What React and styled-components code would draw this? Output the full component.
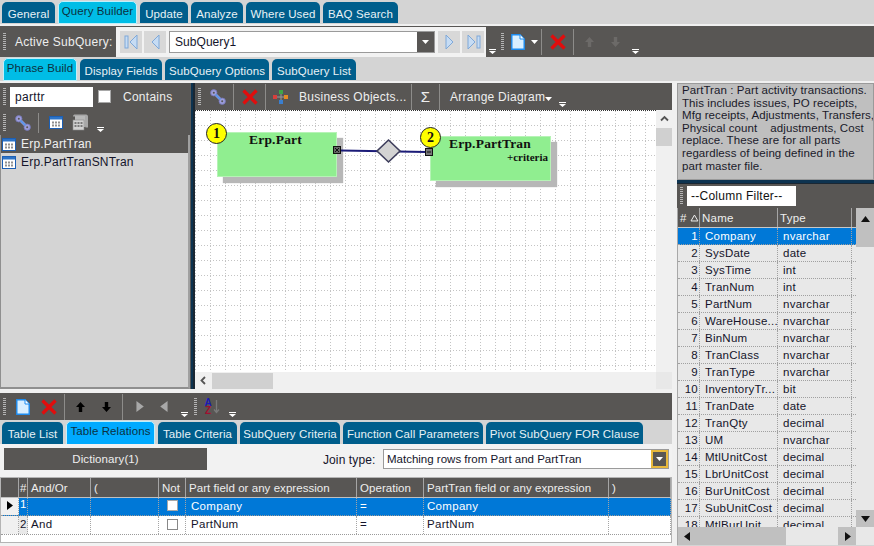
import React from "react";
import styled, { createGlobalStyle } from "styled-components";

const Global = createGlobalStyle`
  html, body { margin: 0; padding: 0; background: #d4d4d4; overflow: hidden; }
  * { box-sizing: border-box; }
`;
const DARK = "#585654";
const Page = styled.div`
  width: 874px; height: 546px; overflow: hidden; background: #d4d4d4;
  font: 11.5px "Liberation Sans", Arial, sans-serif; letter-spacing: .3px; color: #14142a;
  display: flex; flex-direction: column;
`;
const TabRow = styled.div`
  display: flex; align-items: flex-end; flex: none;
  height: ${p => p.$h}px; gap: ${p => p.$gap ?? 3}px; padding-left: ${p => p.$left}px;
  padding-bottom: ${p => p.$pb ?? 0}px;
  background: ${p => p.$bg ?? "#d4d4d4"};
  border-bottom: ${p => p.$line ? "2px solid #f0f0f0" : "0"};
`;
const Tab = styled.div`
  width: ${p => p.$w}px; height: ${p => (p.$active ? p.$th + 2 : p.$th)}px; flex: none;
  display: flex; align-items: center; justify-content: center; white-space: nowrap;
  border-radius: 5px 5px 0 0;
  font-size: 11.5px; letter-spacing: .1px;
  background: ${p => (p.$active ? p.$color ?? "#00bde6" : "#005e8c")};
  color: ${p => (p.$active ? "#0c3140" : "#e8f2f6")};
  border: ${p => (p.$active ? "1px solid #bff0fb" : "0")};
  padding-bottom: ${p => (p.$active ? 4 : 0)}px;
  padding-top: ${p => (p.$active ? 0 : 2)}px;
  margin-bottom: ${p => (p.$active ? -1 : 0)}px;
`;
const Bar = styled.div`
  display: flex; align-items: center; flex: none;
  height: ${p => p.$h}px; background: ${DARK}; color: #eeeeee;
`;
const Slot = styled.div`
  flex: none; width: ${p => p.$w}px; height: 100%;
  display: flex; align-items: center; justify-content: center;
`;
const SigmaSlot = styled(Slot)`
  font-size: 15px; letter-spacing: 0;
`;
const CornerSlot = styled(Slot)`
  align-items: flex-end; padding-bottom: 3px;
`;
const Grip = styled.div`
  flex: none; width: ${p => p.$w ?? 8}px; height: 100%;
  display: flex; align-items: center; justify-content: center;
  &::before {
    content: ""; flex: none; width: 3px; height: ${p => p.$h ?? 18}px;
    background: repeating-linear-gradient(#b4b4b4 0 1px, transparent 1px 2px);
  }
`;
const Sep = styled.div`
  flex: none; width: 1px; height: ${p => p.$h ?? 26}px; background: #8d8c8a;
`;
const BarLabel = styled.div`
  flex: none; width: ${p => p.$w}px; padding-left: ${p => p.$pl ?? 0}px;
  font-size: 12px; letter-spacing: .26px; white-space: nowrap; color: #eeeeee;
`;
const NavPanel = styled.div`
  flex: none; width: 370px; height: 30px; margin-top: 1px; background: #f2f2f2;
  display: flex; align-items: center; padding-left: 4px; gap: 2px;
`;
const NavBtn = styled.div`
  width: 22px; height: 22px; flex: none; background: #d8d8d8;
  display: flex; align-items: center; justify-content: center;
`;
const Combo = styled.div`
  flex: none; display: flex; align-items: stretch;
  width: ${p => p.$w}px; height: ${p => p.$h}px; margin: ${p => p.$mt ?? 0}px ${p => p.$mr ?? 0}px 0 ${p => p.$ml ?? 0}px;
  background: #fff; border: 1px solid #9a9a9a; color: #14142a;
`;
const ComboText = styled.div`
  flex: 1; padding-left: ${p => p.$pl ?? 5}px; display: flex; align-items: center;
  font-size: ${p => p.$fs}px; letter-spacing: ${p => p.$ls}px; white-space: nowrap;
`;
const ComboBtn = styled.div`
  width: ${p => p.$w}px; background: ${DARK}; display: flex; align-items: center; justify-content: center;
  border: ${p => (p.$gold ? "2px solid #e8b93c" : "0")};
`;
const Body = styled.div`
  flex: 1; display: flex; min-height: 0; background: #f0f0f0;
`;
const LeftCol = styled.div`
  width: 672px; flex: none; display: flex; flex-direction: column;
`;
const Upper = styled.div`
  display: flex; height: 306px; flex: none;
`;
const SearchPane = styled.div`
  width: 190px; flex: none; display: flex; flex-direction: column;
`;
const VSplit = styled.div`
  flex: none; width: 5px; border-right: 2px solid #1a2733; background: #0d3350; border-left: 1px solid #5a5a5a;
`;
const SearchInput = styled.div`
  width: 83px; height: 20px; margin-left: 2px; background: #fff; padding-left: 5px;
  display: flex; align-items: center; font-size: 12px; color: #14142a; flex: none;
`;
const CheckBox = styled.div`
  width: ${p => p.$s ?? 13}px; height: ${p => p.$s ?? 13}px; flex: none; background: #fff;
  border: 1px solid ${p => p.$edge ?? "#a8a8a8"};
`;
const TableList = styled.div`
  flex: 1; background: #d4d4d4; border: 1px solid #8f8f8f; border-top: 0; border-bottom-width: 2px;
  border-right: 2px solid #a0a0a0;
`;
const ListRow = styled.div`
  height: 18px; display: flex; align-items: center; gap: 5px; padding-left: 1px;
  font-size: 12px; letter-spacing: .2px;
  background: ${p => (p.$sel ? DARK : "transparent")};
  color: ${p => (p.$sel ? "#f0f0f0" : "#14142a")};
`;
const DiagramPane = styled.div`
  flex: 1; display: flex; flex-direction: column; min-width: 0;
`;
const CanvasArea = styled.div`
  flex: 1; display: grid; grid-template-columns: 1fr 16px; grid-template-rows: 1fr 17px; background: #f0f0f0;
`;
const Canvas = styled.div`
  position: relative; overflow: hidden; background: #fff; border-top: 1px dotted #333;
`;
const GridSvg = styled.svg`
  position: absolute; inset: 0; width: 100%; height: 100%;
`;
const Node = styled.div`
  position: absolute; left: ${p => p.$x}px; top: ${p => p.$y}px; width: ${p => p.$w}px; height: 45px;
  background: #90ee90; border: 1px solid #b6f3b6;
  box-shadow: 6px 6px 1px #b7b7b7;
  font-family: "Liberation Serif", "Times New Roman", serif; color: #111; letter-spacing: 0;
`;
const NodeTitle = styled.div`
  position: absolute; left: ${p => p.$x}px; top: ${p => p.$y}px; font-weight: 700; font-size: 13.5px; line-height: 14px; letter-spacing: .2px;
`;
const NodeNote = styled.div`
  position: absolute; right: 2px; top: 14px; font-weight: 700; font-size: 11px; line-height: 12px;
`;
const Badge = styled.div`
  position: absolute; left: ${p => p.$x}px; top: ${p => p.$y}px; width: 21px; height: 21px; border-radius: 50%;
  background: #ffff00; border: 1px solid #222; display: flex; align-items: center; justify-content: center;
  font: 700 14px "Liberation Serif", serif; color: #111; letter-spacing: 0;
`;
const VBar = styled.div`
  background: #f0f0f0; display: flex; flex-direction: column; align-items: center; padding-top: 4px;
`;
const VThumb = styled.div`
  width: 16px; height: 18px; margin-top: 5px; background: #d0d0d0;
`;
const HBar = styled.div`
  background: #f0f0f0; display: flex; align-items: center; padding-left: 4px;
`;
const HThumb = styled.div`
  width: 61px; height: 16px; margin-left: 4px; background: #d0d0d0;
`;
const Gap = styled.div`
  height: ${p => p.$h}px; flex: none;
`;
const LowerPanel = styled.div`
  flex: 1; background: #f2f2f2; display: flex; flex-direction: column; min-height: 0;
`;
const JoinRow = styled.div`
  height: 33px; flex: none; display: flex; align-items: flex-start; padding: 4px 0 0 4px;
`;
const DictBtn = styled.div`
  width: 203px; height: 22px; flex: none; background: ${DARK}; color: #eee;
  display: flex; align-items: center; justify-content: center; font-size: 11.5px; letter-spacing: .1px;
`;
const JoinLabel = styled.div`
  flex: none; margin: 5px 0 0 116px; width: 60px; font-size: 12px; letter-spacing: .1px; color: #14142a;
`;
const Table = styled.div`
  flex: none; height: 66px; border: 1px solid #b4b4b4; background: #fff;
`;
const RelRow = styled.div`
  display: grid; height: ${p => p.$h}px; grid-template-columns: 18px 9px 63px 68px 27px 171px 67px 185px 1fr;
  background: ${p => p.$bg}; color: ${p => p.$fg};
  ${p => p.$head ? "border-bottom: 1px solid #c0c0c0;" : "border-bottom: 1px dotted #9a9a9a;"}
`;
const RelCell = styled.div`
  display: flex; align-items: ${p => p.$a ?? "center"}; padding-left: ${p => p.$pl ?? 3}px;
  padding-bottom: ${p => p.$head ? 0 : 2}px;
  justify-content: ${p => p.$center ? "center" : "flex-start"};
  font-size: 11.5px; letter-spacing: ${p => p.$head ? ".05px" : ".3px"}; white-space: nowrap; overflow: hidden;
  border-right: ${p => p.$head ? "1px solid #a5a5a5" : "1px dotted #a5a5a5"};
  background: ${p => p.$bg ?? "transparent"};
`;
const RightCol = styled.div`
  flex: 1; margin-left: 5px; display: flex; flex-direction: column; background: #d4d4d4; min-width: 0;
`;
const Description = styled.div`
  height: 97px; flex: none; background: #bfbfbf; border: 1px solid #9a9a9a; padding: 0 0 0 4px;
  font-size: 11.5px; line-height: 12.6px; letter-spacing: .08px; color: #1a1a2a; white-space: pre; overflow: hidden;
`;
const HSplit = styled.div`
  height: 4px; flex: none; background: #0d3350; border-bottom: 1px solid #1a2733;
`;
const FilterInput = styled.div`
  width: 109px; height: 20px; flex: none; margin-left: 2px; background: #fff; display: flex; align-items: center;
  padding-left: 4px; font-size: 12px; color: #111; letter-spacing: .25px;
`;
const ColGrid = styled.div`
  flex: 1; display: grid; grid-template-columns: 1fr 18px; grid-template-rows: 1fr 18px; min-height: 0;
  background: #e8e8e8; border-left: 1px solid #a8a8a8;
`;
const ColBody = styled.div`
  overflow: hidden; background: #e8e8e8;
`;
const ColRow = styled.div`
  display: grid; grid-template-columns: 22px 78px 74px 1fr; height: ${p => p.$h ?? 17}px;
  background: ${p => p.$bg ?? "transparent"}; color: ${p => p.$fg ?? "#14142a"};
  border-bottom: ${p => p.$head ? "1px solid #c8c8c8" : "1px dotted #a0a0a0"};
`;
const ColCell = styled.div`
  display: flex; align-items: center; font-size: 11.5px; letter-spacing: .25px; white-space: nowrap; overflow: hidden; padding: 0 ${p => p.$pr ?? 0}px 0 ${p => p.$pl ?? 5}px;
  justify-content: ${p => p.$end ? "flex-end" : "flex-start"};
  border-right: ${p => p.$head ? "1px solid #a5a5a5" : "1px dotted #a0a0a0"};
`;
const ColVBar = styled.div`
  background: #e8e8e8; display: flex; flex-direction: column; justify-content: space-between;
`;
const ScrollBlock = styled.div`
  height: ${p => p.$h}px; flex: none; background: #c0c0c0; display: flex; align-items: ${p => p.$top ? "flex-start" : "center"}; justify-content: center;
  padding-top: ${p => p.$top ? 7 : 0}px;
`;
const ColHBar = styled.div`
  background: #e8e8e8; display: flex; align-items: stretch;
`;
const ColHThumb = styled.div`
  width: 108px; background: #c0c0c0; display: flex; align-items: center; padding-left: 5px;
`;
const ColHBtn = styled.div`
  width: 18px; margin-left: auto; background: #c0c0c0; display: flex; align-items: center; justify-content: center;
`;
const CornerFill = styled.div`
  background: #e8e8e8;
`;
const SortStack = styled.div`
  display: flex; flex-direction: column; align-items: center; margin-right: 1px;
  font: 700 10px/8px "Liberation Sans", sans-serif; letter-spacing: 0;
`;
const SortLetter = styled.span`
  color: ${p => p.$c};
`;

const Overflow = () => (
  <svg width="7" height="5" viewBox="0 0 7 5"><path d="M0 0h7v1H0zM0 2h7L3.5 5z" fill="#fff" /></svg>
);
const Caret = ({ c = "#fff" }) => (
  <svg width="7" height="4" viewBox="0 0 7 4"><path d="M0 0h7L3.5 4z" fill={c} /></svg>
);
const Tri = ({ d, c = "#111", s = 9 }) => {
  const paths = { up: "M0 7L4.5 1 9 7z", down: "M0 2L4.5 8 9 2z", left: "M7 0L1 4.5 7 9z", right: "M2 0L8 4.5 2 9z" };
  return <svg width={s} height={s} viewBox="0 0 9 9"><path d={paths[d]} fill={c} /></svg>;
};
const Chev = ({ d }) => (
  <svg width="9" height="9" viewBox="0 0 9 9">
    <path d={d === "up" ? "M1 6.5L4.5 3 8 6.5" : "M6 1L2.5 4.5 6 8"} fill="none" stroke="#555" strokeWidth="1.8" />
  </svg>
);
const LinkIcon = () => (
  <svg width="16" height="16" viewBox="0 0 16 16">
    <circle cx="3.8" cy="3.8" r="3.2" fill="#9c9ddb" stroke="#7476b8" strokeWidth=".8" />
    <circle cx="12.2" cy="12.2" r="3.2" fill="#9c9ddb" stroke="#7476b8" strokeWidth=".8" />
    <circle cx="3.8" cy="3.8" r="1" fill="#585654" />
    <circle cx="12.2" cy="12.2" r="1" fill="#585654" />
    <path d="M6 6L10 10" stroke="#8f92d8" strokeWidth="3" />
    <path d="M5.5 5.5L10.5 10.5" stroke="#4f9bf0" strokeWidth="1.2" />
  </svg>
);
const RedX = () => (
  <svg width="16" height="16" viewBox="0 0 16 16">
    <path d="M1.5 1.5L14.5 14.5M14.5 1.5L1.5 14.5" stroke="#e00d0d" strokeWidth="3.3" />
  </svg>
);
const DocIcon = () => (
  <svg width="14" height="16" viewBox="0 0 14 16">
    <path d="M.8.8H9L13.2 5v10.2H.8z" fill="#d9efff" stroke="#1d8cf0" strokeWidth="1.4" />
    <path d="M9 .8V5h4.2" fill="#fff" stroke="#1d8cf0" strokeWidth="1" />
  </svg>
);
const ObjectsIcon = () => (
  <svg width="16" height="16" viewBox="0 0 16 16">
    <path d="M3 8h10M8 3v10" stroke="#9a9a9a" strokeWidth="1" />
    <rect x="6" y="1" width="4" height="4" fill="#3fa648" />
    <rect x="0" y="6" width="4" height="4" fill="#d8403c" />
    <rect x="11" y="6" width="4" height="4" fill="#e58a22" />
    <rect x="6" y="11" width="4" height="4" fill="#3a7fd0" />
  </svg>
);
const TableIcon = () => (
  <svg width="14" height="13" viewBox="0 0 14 13">
    <rect x=".5" y=".5" width="13" height="12" fill="#fff" stroke="#1c5fb4" />
    <rect x="1" y="1" width="12" height="2.5" fill="#2d74c8" />
    <path d="M3 5.5h2v2H3zM6 5.5h2v2H6zM9 5.5h2v2H9zM3 8.5h2v2H3zM6 8.5h2v2H6zM9 8.5h2v2H9z" fill="#8f8f8f" />
  </svg>
);
const ScrollIcon = () => (
  <svg width="18" height="17" viewBox="0 0 18 17">
    <path d="M1 2.5C1 1 2 .5 3 .5h11c1.4 0 2 1 2 2v11h-1.5c-1 0-1.5-.5-1.5-1.5V2.5H3z" fill="#a8a8a8" />
    <path d="M3 2h10v11H3z" fill="#b8b8b8" />
    <rect x="1" y="6" width="11" height="10" fill="#d2d2d2" stroke="#8a8a8a" strokeWidth=".6" />
    <path d="M2.5 8h2v2h-2zM5.5 8h2v2h-2zM8.5 8h2v2h-2zM2.5 11h2v2h-2zM5.5 11h2v2h-2zM8.5 11h2v2h-2z" fill="#7a7a7a" />
  </svg>
);
const NavIcon = ({ d, bar }) => (
  <svg width="15" height="16" viewBox="0 0 15 16" fill="#c6dcf4" stroke="#7fa8d8" strokeWidth="1">
    {d === "left"
      ? <path d={bar ? "M13 1L6 8l7 7z" : "M11 1L4 8l7 7z"} />
      : <path d={bar ? "M2 1l7 7-7 7z" : "M4 1l7 7-7 7z"} />}
    {bar && <rect x={d === "left" ? 1 : 11} y="2" width="3" height="12" />}
  </svg>
);
const Arrow = ({ d, c = "#000" }) => (
  <svg width="11" height="12" viewBox="0 0 11 12">
    <path d={d === "up" ? "M5.5 1L10 6H7.2v5H3.8V6H1z" : "M5.5 11L10 6H7.2V1H3.8v5H1z"} fill={c} />
  </svg>
);
const SortArrow = () => (
  <svg width="7" height="15" viewBox="0 0 7 15">
    <path d="M3.5 1v12M1 10.5l2.5 3 2.5-3" fill="none" stroke="#7a7a7a" strokeWidth="1.3" />
  </svg>
);

const colData = [
  ["Company", "nvarchar"], ["SysDate", "date"], ["SysTime", "int"], ["TranNum", "int"], ["PartNum", "nvarchar"],
  ["WareHouse...", "nvarchar"], ["BinNum", "nvarchar"], ["TranClass", "nvarchar"], ["TranType", "nvarchar"],
  ["InventoryTr...", "bit"], ["TranDate", "date"], ["TranQty", "decimal"], ["UM", "nvarchar"], ["MtlUnitCost", "decimal"],
  ["LbrUnitCost", "decimal"], ["BurUnitCost", "decimal"], ["SubUnitCost", "decimal"], ["MtlBurUnit...", "decimal"],
];
const topTabs = [["General", 53], ["Query Builder", 79, true], ["Update", 48], ["Analyze", 52], ["Where Used", 74], ["BAQ Search", 75]];
const subTabs = [["Phrase Build", 74, true], ["Display Fields", 82], ["SubQuery Options", 104], ["SubQuery List", 84]];
const lowTabs = [["Table List", 61], ["Table Relations", 89, true], ["Table Criteria", 79], ["SubQuery Criteria", 100], ["Function Call Parameters", 140], ["Pivot SubQuery FOR Clause", 157]];
const description = `PartTran : Part activity transactions.
This includes issues, PO receipts,
Mfg receipts, Adjustments, Transfers,
Physical count    adjustments, Cost
replace. These are for all parts
regardless of being defined in the
part master file.`;

export default function App() {
  return (
    <Page>
      <Global />
      <TabRow $h={26} $left={2} $pb={1} $line>
        {topTabs.map(([t, w, a]) => <Tab key={t} $w={w} $th={21} $active={a}>{t}</Tab>)}
      </TabRow>
      <Bar $h={31}>
        <Grip />
        <BarLabel $w={108} $pl={7}>Active SubQuery:</BarLabel>
        <NavPanel>
          <NavBtn><NavIcon d="left" bar /></NavBtn>
          <NavBtn><NavIcon d="left" /></NavBtn>
          <Combo $w={266} $h={22} $ml={1} $mr={1}>
            <ComboText $fs={12} $ls={.05}>SubQuery1</ComboText>
            <ComboBtn $w={17}><Caret /></ComboBtn>
          </Combo>
          <NavBtn><NavIcon d="right" /></NavBtn>
          <NavBtn><NavIcon d="right" bar /></NavBtn>
        </NavPanel>
        <CornerSlot $w={12}><Overflow /></CornerSlot>
        <Grip />
        <Slot $w={24}><DocIcon /></Slot>
        <Slot $w={9}><Caret /></Slot>
        <Slot $w={4}><Sep /></Slot>
        <Slot $w={30}><RedX /></Slot>
        <Sep />
        <Slot $w={30}><Arrow d="up" c="#6c6a68" /></Slot>
        <Slot $w={22}><Arrow d="down" c="#6c6a68" /></Slot>
        <CornerSlot $w={18}><Overflow /></CornerSlot>
      </Bar>
      <TabRow $h={26} $left={3} $gap={3} $line $pb={1}>
        {subTabs.map(([t, w, a]) => <Tab key={t} $w={w} $th={21} $active={a}>{t}</Tab>)}
      </TabRow>
      <Body>
        <LeftCol>
          <Upper>
            <SearchPane>
              <Bar $h={27}>
                <Grip />
                <SearchInput>parttr</SearchInput>
                <Slot $w={5} />
                <CheckBox $s={13} />
                <BarLabel $w={60} $pl={12}>Contains</BarLabel>
              </Bar>
              <Bar $h={25}>
                <Grip />
                <Slot $w={30}><LinkIcon /></Slot>
                <Sep $h={20} />
                <Slot $w={33}><TableIcon /></Slot>
                <Slot $w={18}><ScrollIcon /></Slot>
                <CornerSlot $w={20}><Overflow /></CornerSlot>
              </Bar>
              <TableList>
                <ListRow $sel><TableIcon />Erp.PartTran</ListRow>
                <ListRow><TableIcon />Erp.PartTranSNTran</ListRow>
              </TableList>
            </SearchPane>
            <VSplit />
            <DiagramPane>
              <Bar $h={27}>
                <Grip />
                <Slot $w={30}><LinkIcon /></Slot>
                <Sep />
                <Slot $w={31}><RedX /></Slot>
                <Sep />
                <Slot $w={30}><ObjectsIcon /></Slot>
                <BarLabel $w={115} $pl={3}>Business Objects...</BarLabel>
                <Sep />
                <SigmaSlot $w={27}>Σ</SigmaSlot>
                <Sep />
                <BarLabel $w={113} $pl={10}>Arrange Diagram<Caret /></BarLabel>
                <CornerSlot $w={18}><Overflow /></CornerSlot>
              </Bar>
              <CanvasArea>
                <Canvas>
                  <GridSvg>
                    <defs>
                      <pattern id="dots" width="15" height="15" patternUnits="userSpaceOnUse">
                        <path d="M0 14.5h15M.5 0v15" stroke="#c4c4c4" strokeWidth="1" strokeDasharray="1 2" />
                      </pattern>
                    </defs>
                    <rect width="100%" height="100%" fill="url(#dots)" />
                  </GridSvg>
                  <Node $x={22} $y={21} $w={120}>
                    <NodeTitle $x={31} $y={0}>Erp.Part</NodeTitle>
                  </Node>
                  <Node $x={235} $y={25} $w={121}>
                    <NodeTitle $x={18} $y={0}>Erp.PartTran</NodeTitle>
                    <NodeNote>+criteria</NodeNote>
                  </Node>
                  <Badge $x={11} $y={12}>1</Badge>
                  <Badge $x={225} $y={16}>2</Badge>
                  <GridSvg>
                    <path d="M146 39.5L231 41" stroke="#1c1c78" strokeWidth="2" />
                    <path d="M193.5 29L205 40 193.5 51 182 40z" fill="#d3d3d3" stroke="#3e3e5c" strokeWidth="1.6" />
                    <rect x="138.5" y="35.5" width="7" height="7" fill="#666" stroke="#111" />
                    <path d="M140 37l4 4M144 37l-4 4" stroke="#111" />
                    <rect x="230.5" y="37.5" width="7" height="7" fill="#777" stroke="#111" />
                    <path d="M232 41h4" stroke="#111" />
                  </GridSvg>
                </Canvas>
                <VBar><Chev d="up" /><VThumb /></VBar>
                <HBar><Chev d="left" /><HThumb /></HBar>
                <CornerFill />
              </CanvasArea>
            </DiagramPane>
          </Upper>
          <Gap $h={4} />
          <Bar $h={27}>
            <Grip />
            <Slot $w={29}><DocIcon /></Slot>
            <Slot $w={23}><RedX /></Slot>
            <Slot $w={4} />
            <Sep />
            <Slot $w={30}><Arrow d="up" /></Slot>
            <Slot $w={22}><Arrow d="down" /></Slot>
            <Slot $w={5} />
            <Sep />
            <Slot $w={33}><Tri d="right" c="#a8a8a8" s={11} /></Slot>
            <Slot $w={17}><Tri d="left" c="#a8a8a8" s={11} /></Slot>
            <CornerSlot $w={22}><Overflow /></CornerSlot>
            <Grip $w={1} />
            <Slot $w={32}>
              <SortStack>
                <SortLetter $c="#1a1ab4">A</SortLetter>
                <SortLetter $c="#a01030">Z</SortLetter>
              </SortStack>
              <SortArrow />
            </Slot>
            <CornerSlot $w={8}><Overflow /></CornerSlot>
          </Bar>
          <TabRow $h={24} $left={2} $gap={3} $bg="#d4d4d4">
            {lowTabs.map(([t, w, a]) => <Tab key={t} $w={w} $th={22} $active={a} $color="#00aaff">{t}</Tab>)}
          </TabRow>
          <LowerPanel>
            <JoinRow>
              <DictBtn>Dictionary(1)</DictBtn>
              <JoinLabel>Join type:</JoinLabel>
              <Combo $w={286} $h={20} $ml={0} $mt={1}>
                <ComboText $fs={11.5} $ls={0} $pl={3}>Matching rows from Part and PartTran</ComboText>
                <ComboBtn $w={17} $gold><Caret /></ComboBtn>
              </Combo>
            </JoinRow>
            <Table>
              <RelRow $head $h={20} $bg={DARK} $fg="#eee">
                <RelCell $head />
                <RelCell $head $pl={1}>#</RelCell>
                <RelCell $head>And/Or</RelCell>
                <RelCell $head>(</RelCell>
                <RelCell $head>Not</RelCell>
                <RelCell $head>Part field or any expression</RelCell>
                <RelCell $head>Operation</RelCell>
                <RelCell $head>PartTran field or any expression</RelCell>
                <RelCell $head>)</RelCell>
              </RelRow>
              <RelRow $h={18} $bg="#0078d7" $fg="#fff">
                <RelCell $bg="#f0f0f0" $center $pl={0}><Tri d="right" c="#000" /></RelCell>
                <RelCell $pl={1} $a="flex-start">1</RelCell>
                <RelCell />
                <RelCell />
                <RelCell $center $pl={0}><CheckBox $s={11} /></RelCell>
                <RelCell $pl={5}>Company</RelCell>
                <RelCell>=</RelCell>
                <RelCell>Company</RelCell>
                <RelCell />
              </RelRow>
              <RelRow $h={19} $bg="#fff" $fg="#14142a">
                <RelCell $bg="#f0f0f0" />
                <RelCell $pl={1} $bg="#e8e8e8">2</RelCell>
                <RelCell>And</RelCell>
                <RelCell />
                <RelCell $center $pl={0}><CheckBox $s={11} $edge="#888" /></RelCell>
                <RelCell $pl={5}>PartNum</RelCell>
                <RelCell>=</RelCell>
                <RelCell>PartNum</RelCell>
                <RelCell />
              </RelRow>
            </Table>
          </LowerPanel>
        </LeftCol>
        <RightCol>
          <Description>{description}</Description>
          <HSplit />
          <Bar $h={24}>
            <Grip />
            <FilterInput>--Column Filter--</FilterInput>
          </Bar>
          <ColGrid>
            <ColBody>
              <ColRow $head $h={20} $bg={DARK} $fg="#eee">
                <ColCell $head $pl={2}>#&nbsp;<svg width="9" height="8" viewBox="0 0 9 8"><path d="M4.5 1L8 7H1z" fill="none" stroke="#eee" /></svg></ColCell>
                <ColCell $head $pl={2}>Name</ColCell>
                <ColCell $head $pl={2}>Type</ColCell>
                <ColCell $head />
              </ColRow>
              {colData.map(([n, t], i) => (
                <ColRow key={n} $bg={i === 0 ? "#0078d7" : undefined} $fg={i === 0 ? "#fff" : undefined}>
                  <ColCell $end $pl={0} $pr={1}>{i + 1}</ColCell>
                  <ColCell>{n}</ColCell>
                  <ColCell>{t}</ColCell>
                  <ColCell />
                </ColRow>
              ))}
            </ColBody>
            <ColVBar>
              <ScrollBlock $h={39} $top><Tri d="up" c="#111" /></ScrollBlock>
              <ScrollBlock $h={17}><Tri d="down" c="#111" /></ScrollBlock>
            </ColVBar>
            <ColHBar>
              <ColHThumb><Tri d="left" c="#111" /></ColHThumb>
              <ColHBtn><Tri d="right" c="#111" /></ColHBtn>
            </ColHBar>
            <CornerFill />
          </ColGrid>
          <Gap $h={1} />
        </RightCol>
      </Body>
    </Page>
  );
}
